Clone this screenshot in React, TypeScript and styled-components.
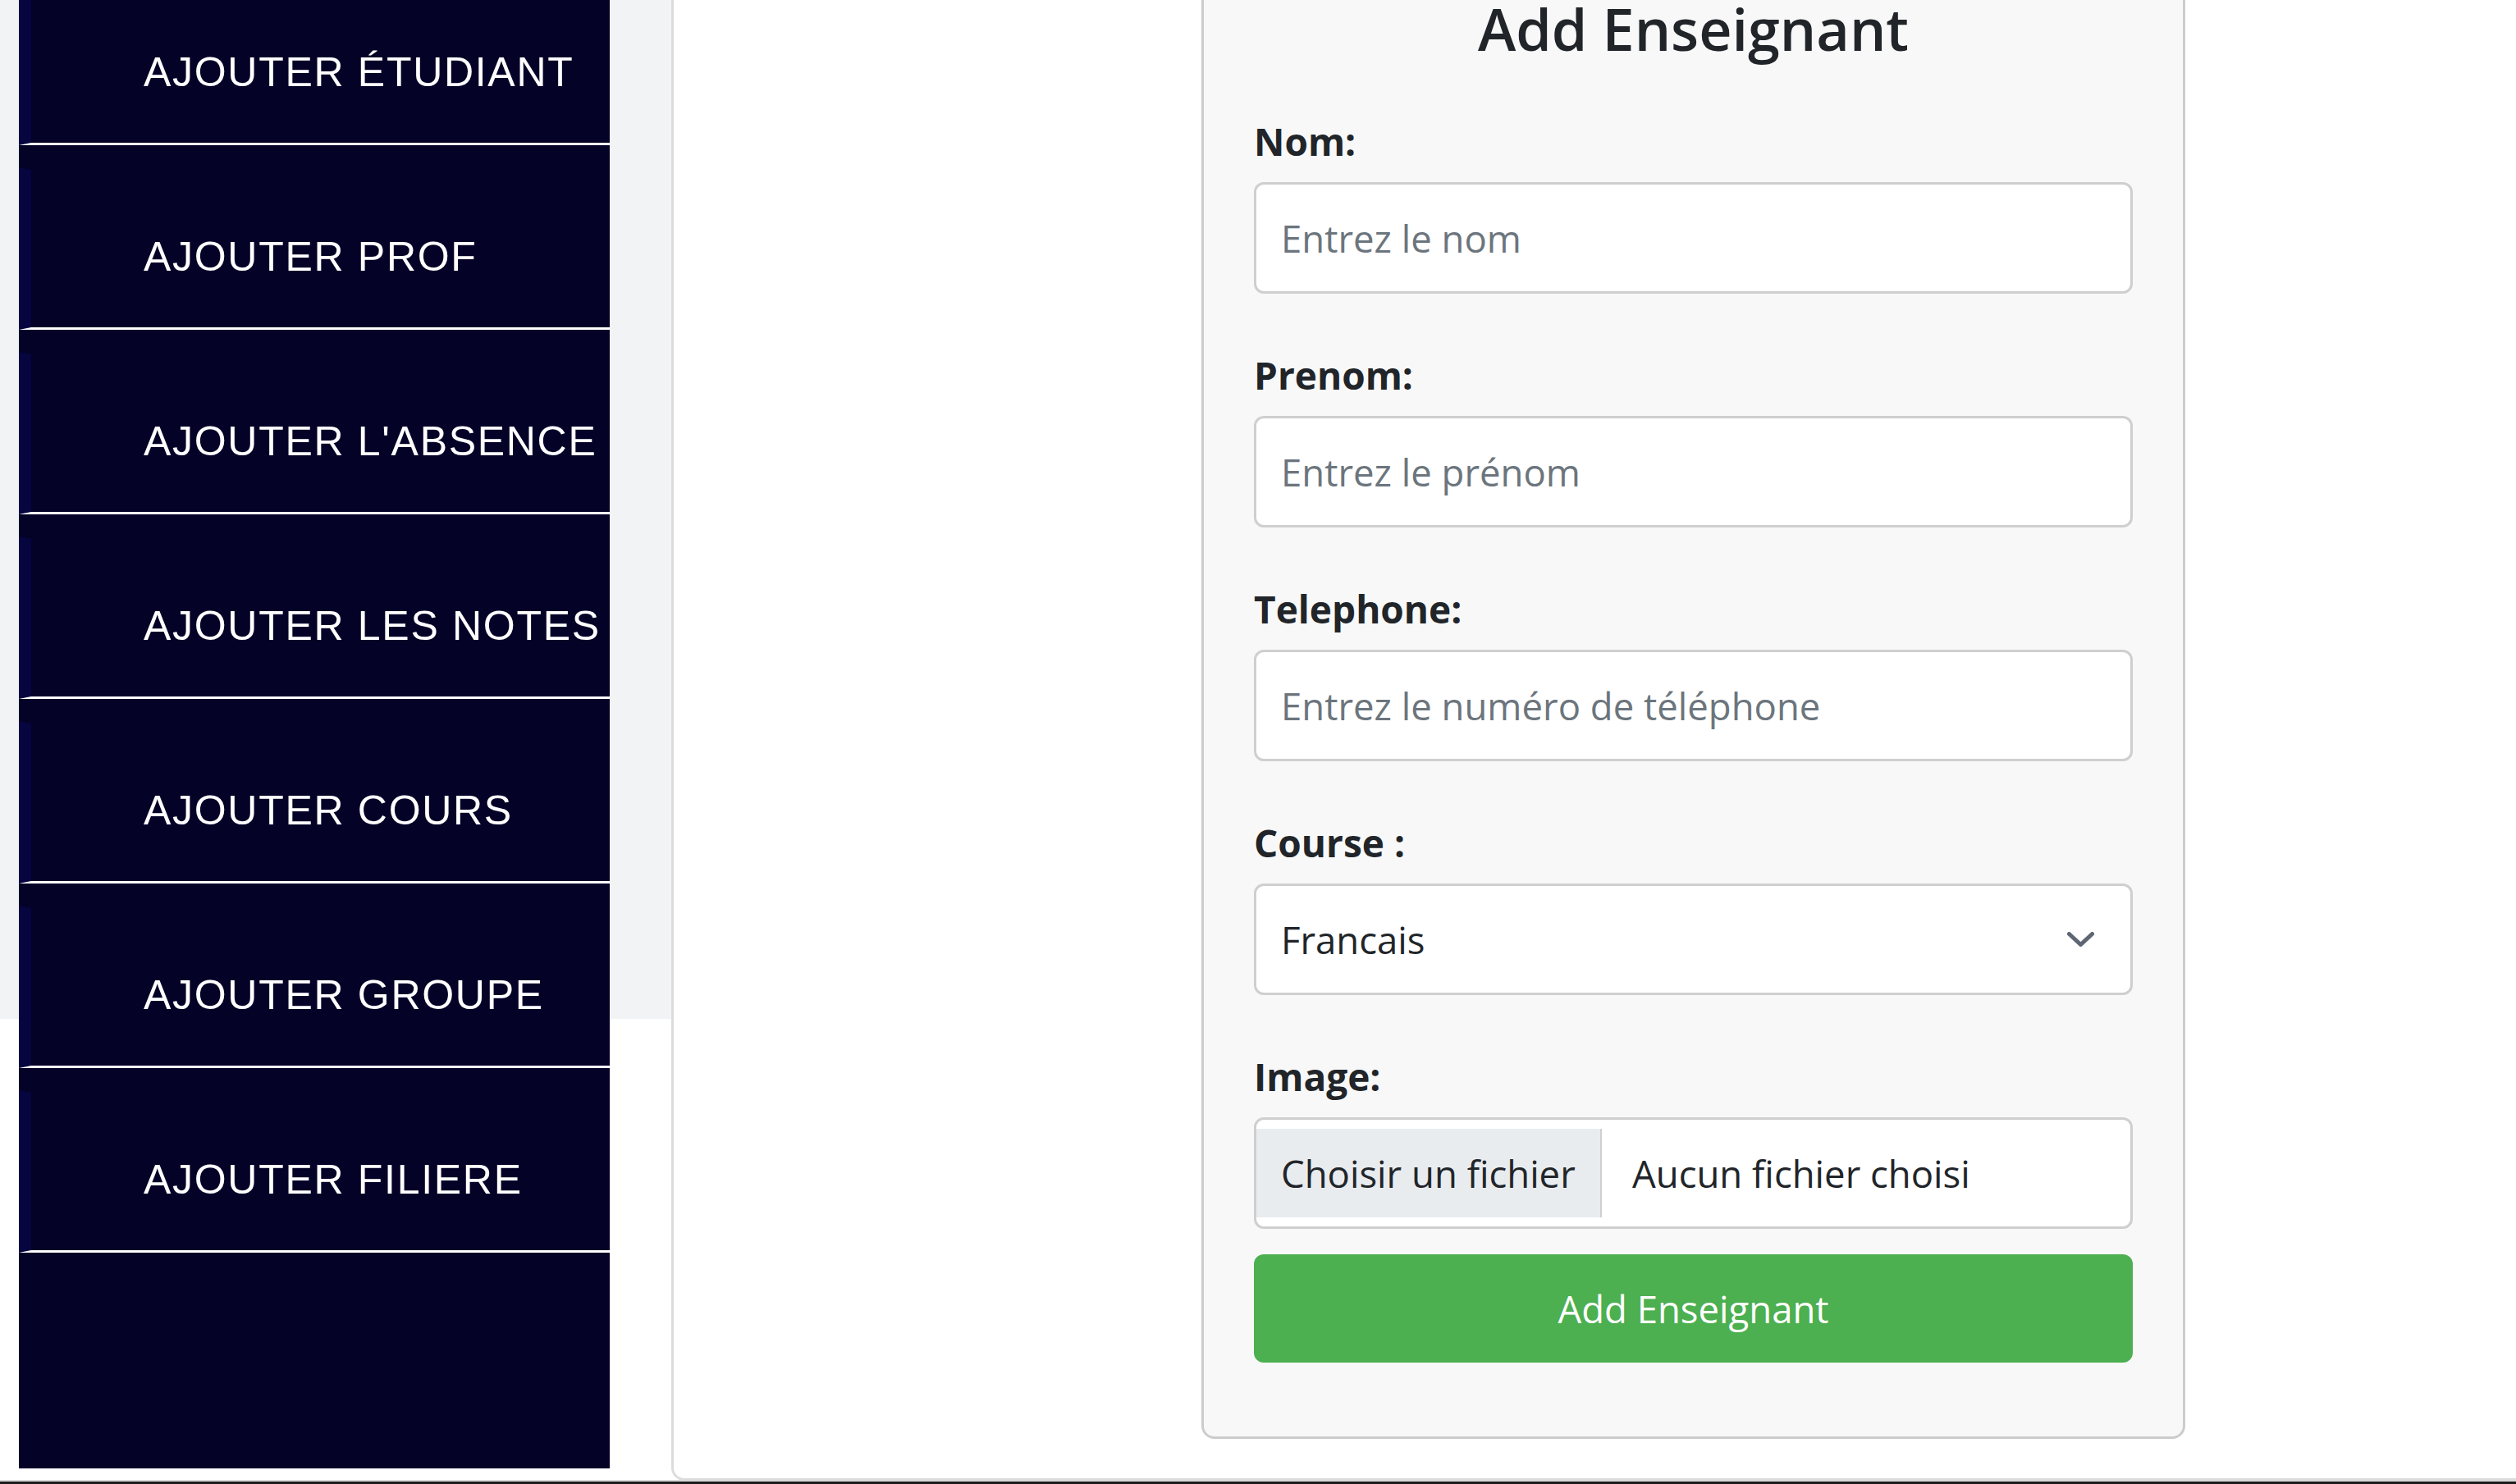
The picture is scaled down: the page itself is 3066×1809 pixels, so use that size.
import React from "react";
import styled, { createGlobalStyle } from "styled-components";

const GlobalStyle = createGlobalStyle`
  html, body {
    margin: 0;
    padding: 0;
    background: #ffffff;
  }
  * { box-sizing: border-box; }
`;

const Page = styled.div`
  width: 3066px;
  height: 1809px;
  overflow: hidden;
  display: flex;
  flex-direction: column;
  background: #ffffff;
`;

const Viewport = styled.div`
  flex: 1;
  min-height: 0;
  overflow: hidden;
`;

/* simulates the page being scrolled down by 48px */
const Scrolled = styled.div`
  margin-top: -48px;
  display: flex;
  align-items: flex-start;
`;

const BottomBar = styled.div`
  height: 5px;
  flex-shrink: 0;
  border-top: 2px solid #d9d9d9;
  background: #1c1c1c;
`;

const LeftColumn = styled.div`
  width: 818px;
  flex-shrink: 0;
  background: linear-gradient(#f2f3f5, #f2f3f5) top left / 100% 1290px no-repeat,
    #ffffff;
`;

const Sidebar = styled.nav`
  margin-left: 23px;
  width: 720px;
  background: #050228;
  padding-bottom: 263px;
`;

const NavList = styled.ul`
  list-style: none;
  margin: 0;
  padding: 0;
`;

const NavItem = styled.li`
  box-sizing: content-box;
  margin-top: 27px;
  height: 172px;
  padding: 20px 0 0 137px;
  display: flex;
  align-items: center;
  border-left: 15px solid #07053f;
  border-top: 3px solid #050228;
  border-bottom: 3px solid #ffffff;
  font-family: "Liberation Sans", Arial, sans-serif;
  font-size: 50px;
  letter-spacing: 1.7px;
  color: #ffffff;
  white-space: nowrap;
  cursor: pointer;
`;

const MainPanel = styled.main`
  flex: 1;
  height: 1853px;
  padding: 8px 0 0 643px;
  border-left: 3px solid #dcdcdc;
  border-bottom: 3px solid #dcdcdc;
  border-bottom-left-radius: 16px;
  background: #ffffff;
`;

const Card = styled.section`
  width: 1199px;
  padding: 30px 61px 90px 61px;
  background: #f8f8f8;
  border: 3px solid #cccccc;
  border-radius: 16px;
  font-family: "Open Sans", "Noto Sans", sans-serif;
  color: #212529;
`;

const Title = styled.h2`
  margin: 0 0 72px 0;
  font-size: 70px;
  line-height: 84px;
  font-weight: 550;
  text-align: center;
  color: #212529;
`;

const Form = styled.form`
  display: flex;
  flex-direction: column;
  gap: 31px;
`;

const FieldList = styled.div`
  display: flex;
  flex-direction: column;
  gap: 76px;
`;

const Field = styled.div`
  display: flex;
  flex-direction: column;
`;

const Label = styled.label`
  display: block;
  margin-bottom: 27px;
  font-size: 46px;
  line-height: 46px;
  font-weight: 700;
  color: #212529;
`;

const controlBase = `
  width: 100%;
  height: 136px;
  border: 3px solid #cfcfcf;
  border-radius: 12px;
  background: #ffffff;
  font-family: "Open Sans", "Noto Sans", sans-serif;
  font-size: 45.5px;
  color: #212529;
  outline: none;
`;

const TextInput = styled.input`
  ${controlBase}
  padding: 0 30px;
  &::placeholder {
    color: #6c757d;
    opacity: 1;
  }
`;

const SelectWrap = styled.div`
  position: relative;
`;

const Select = styled.select`
  ${controlBase}
  appearance: none;
  -webkit-appearance: none;
  padding: 0 90px 0 30px;
`;

const Chevron = styled.svg`
  position: absolute;
  right: 47px;
  top: 59px;
  pointer-events: none;
`;

const FileBox = styled.label`
  ${controlBase}
  display: flex;
  align-items: stretch;
  padding: 11px 0;
  cursor: pointer;
`;

const HiddenFile = styled.input`
  display: none;
`;

const FileButton = styled.span`
  display: flex;
  align-items: center;
  width: 421px;
  padding-left: 30px;
  background: #e9ecef;
  border-right: 2px solid #cfcfcf;
  color: #212529;
  white-space: nowrap;
`;

const FileName = styled.span`
  display: flex;
  align-items: center;
  padding-left: 37px;
  color: #212529;
  white-space: nowrap;
`;

const SubmitButton = styled.button`
  height: 132px;
  width: 100%;
  border: none;
  border-radius: 12px;
  background: #4caf50;
  color: #ffffff;
  font-family: "Open Sans", "Noto Sans", sans-serif;
  font-size: 45.5px;
  cursor: pointer;
`;

const navItems = [
  "AJOUTER ÉTUDIANT",
  "AJOUTER PROF",
  "AJOUTER L'ABSENCE",
  "AJOUTER LES NOTES",
  "AJOUTER COURS",
  "AJOUTER GROUPE",
  "AJOUTER FILIERE",
];

export default function App() {
  return (
    <>
      <GlobalStyle />
      <Page>
        <Viewport>
          <Scrolled>
            <LeftColumn>
              <Sidebar>
                <NavList>
                  {navItems.map((item) => (
                    <NavItem key={item}>{item}</NavItem>
                  ))}
                </NavList>
              </Sidebar>
            </LeftColumn>
            <MainPanel>
              <Card>
                <Title>Add Enseignant</Title>
                <Form onSubmit={(e) => e.preventDefault()}>
                  <FieldList>
                    <Field>
                      <Label htmlFor="nom">Nom:</Label>
                      <TextInput id="nom" placeholder="Entrez le nom" />
                    </Field>
                    <Field>
                      <Label htmlFor="prenom">Prenom:</Label>
                      <TextInput id="prenom" placeholder="Entrez le prénom" />
                    </Field>
                    <Field>
                      <Label htmlFor="tel">Telephone:</Label>
                      <TextInput
                        id="tel"
                        placeholder="Entrez le numéro de téléphone"
                      />
                    </Field>
                    <Field>
                      <Label htmlFor="course">Course :</Label>
                      <SelectWrap>
                        <Select id="course" defaultValue="Francais">
                          <option value="Francais">Francais</option>
                          <option value="Anglais">Anglais</option>
                          <option value="Math">Math</option>
                        </Select>
                        <Chevron
                          width="33"
                          height="18"
                          viewBox="0 0 33 18"
                          fill="none"
                        >
                          <path
                            d="M2.5 2.5 L16.5 15.5 L30.5 2.5"
                            stroke="#5d6673"
                            strokeWidth="5"
                            strokeLinecap="round"
                            strokeLinejoin="round"
                          />
                        </Chevron>
                      </SelectWrap>
                    </Field>
                    <Field>
                      <Label as="span">Image:</Label>
                      <FileBox>
                        <HiddenFile type="file" accept="image/*" />
                        <FileButton>Choisir un fichier</FileButton>
                        <FileName>Aucun fichier choisi</FileName>
                      </FileBox>
                    </Field>
                  </FieldList>
                  <SubmitButton type="submit">Add Enseignant</SubmitButton>
                </Form>
              </Card>
            </MainPanel>
          </Scrolled>
        </Viewport>
        <BottomBar />
      </Page>
    </>
  );
}
